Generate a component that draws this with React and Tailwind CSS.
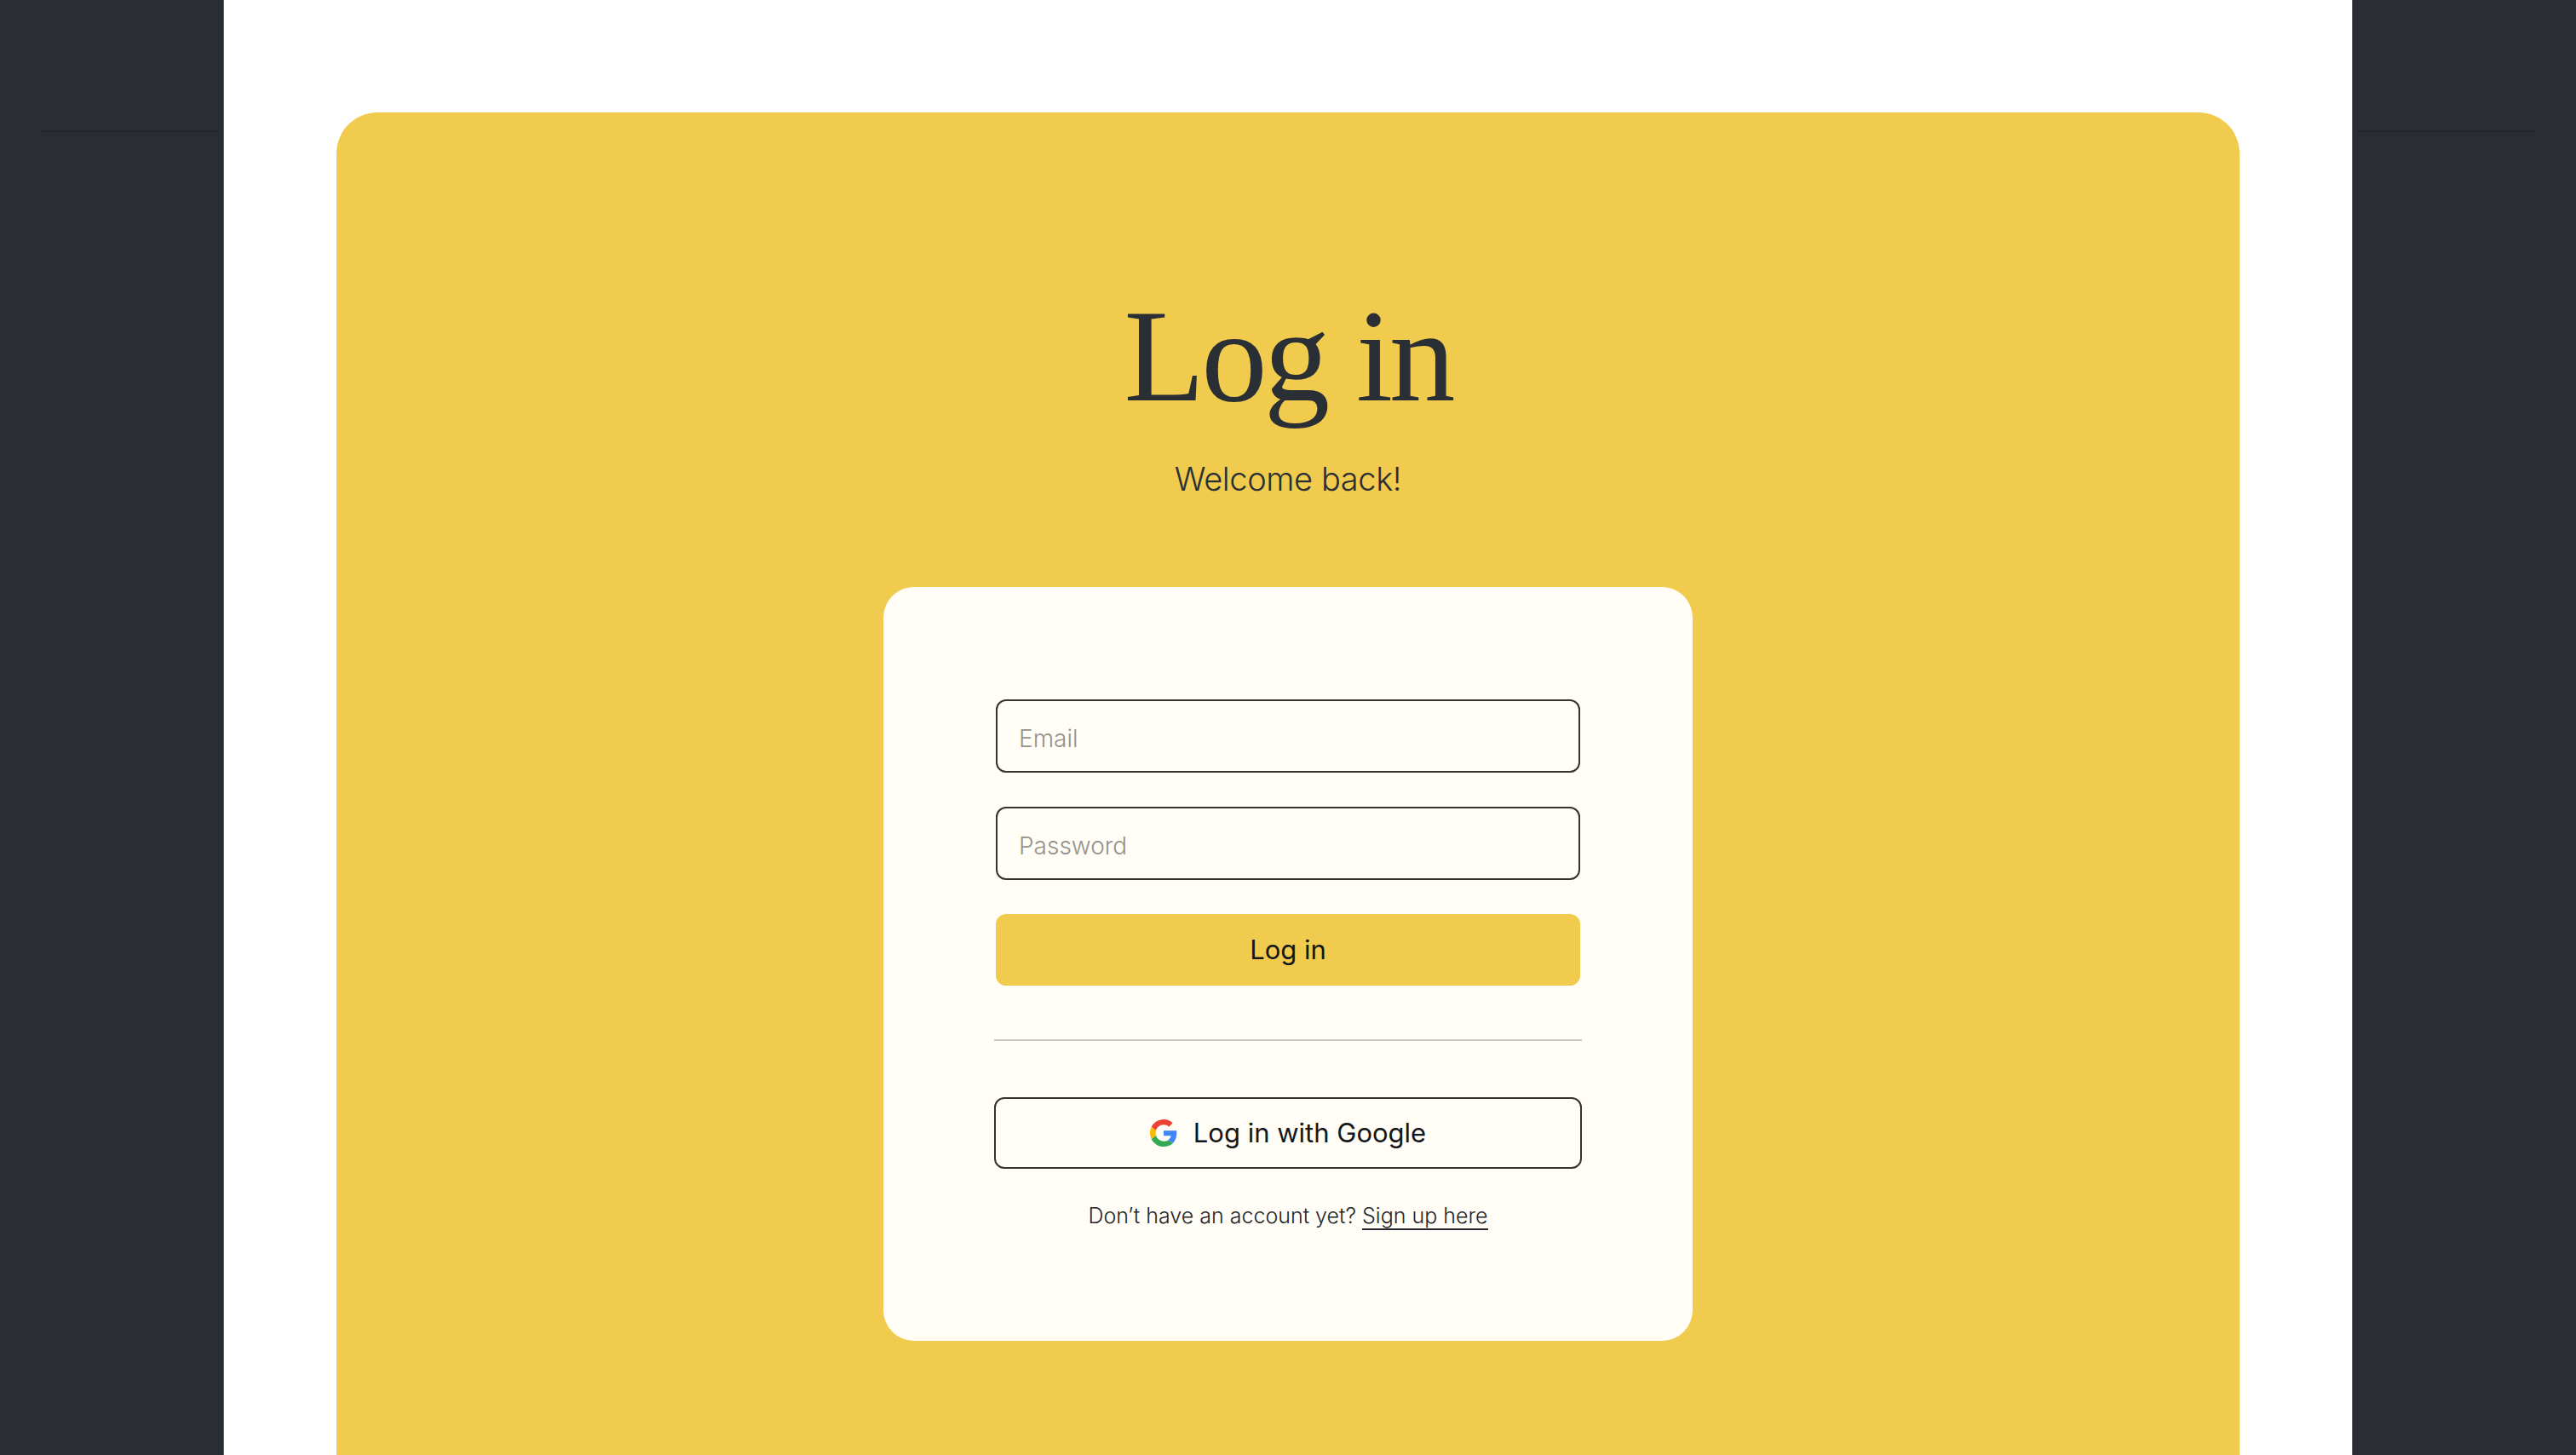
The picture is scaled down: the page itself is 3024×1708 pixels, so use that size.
const GoogleIcon = () => (
  <svg viewBox="0 0 48 48" className="w-[32px] h-[32px]">
    <path fill="#EA4335" d="M24 9.5c3.54 0 6.71 1.22 9.21 3.6l6.85-6.85C35.9 2.38 30.47 0 24 0 14.62 0 6.51 5.38 2.56 13.22l7.98 6.19C12.43 13.72 17.74 9.5 24 9.5z" />
    <path fill="#4285F4" d="M46.98 24.55c0-1.57-.15-3.09-.38-4.55H24v9.02h12.94c-.58 2.96-2.26 5.48-4.78 7.18l7.73 6c4.51-4.18 7.09-10.36 7.09-17.65z" />
    <path fill="#FBBC05" d="M10.53 28.59c-.48-1.45-.76-2.99-.76-4.59s.27-3.14.76-4.59l-7.98-6.19C.92 16.46 0 20.12 0 24c0 3.88.92 7.54 2.56 10.78l7.97-6.19z" />
    <path fill="#34A853" d="M24 48c6.48 0 11.93-2.13 15.89-5.81l-7.73-6c-2.15 1.45-4.92 2.3-8.16 2.3-6.26 0-11.57-4.22-13.47-9.91l-7.98 6.19C6.51 42.62 14.62 48 24 48z" />
  </svg>
);

const LeftSide = () => (
  <div className="w-[262px] shrink-0 pt-[153px]">
    <div className="h-[2px] ml-[48px] mr-[6px] bg-[#222529]" />
  </div>
);

const RightSide = () => (
  <div className="w-[262px] shrink-0 pt-[153px]">
    <div className="h-[2px] ml-[6px] mr-[48px] bg-[#222529]" />
  </div>
);

const App = () => {
  return (
    <div className="flex h-[1708px] overflow-hidden bg-[#2a2d32] font-['Inter',sans-serif]">
      <LeftSide />
      <main className="flex-1 flex flex-col bg-white pt-[132px] px-[132px] border-x border-[#5d666c]">
        <section className="flex-1 flex flex-col items-center bg-[#f1cb4d] rounded-t-[48px] text-[#2a2e35]">
          <h1 className="mt-[206px] text-[155px] leading-[160px] tracking-[-4px] font-['Liberation_Serif',serif]">Log in</h1>
          <p className="mt-[36px] text-[38px] leading-[56px] font-light tracking-[-0.4px]">Welcome back!</p>
          <div className="mt-[99px] w-[950px] h-[885px] flex flex-col bg-[#fffdf5] rounded-[36px] pt-[132px] px-[132px]">
            <input placeholder="Email" className="h-[86px] px-[25px] pt-[6px] text-[28px] font-light rounded-[12px] border-2 border-[#35332f] outline-none placeholder:text-[#96928a]" />
            <input type="text" placeholder="Password" className="mt-[40px] h-[86px] px-[25px] pt-[6px] text-[28px] font-light rounded-[12px] border-2 border-[#35332f] outline-none placeholder:text-[#96928a]" />
            <button className="mt-[40px] h-[84px] rounded-[12px] bg-[#f1cb4d] text-[31px] text-[#14161a]">Log in</button>
            <div className="mt-[63px] -mx-[2px] h-[2px] bg-[#c9c8c1]" />
            <button className="mt-[66px] -mx-[2px] h-[84px] flex items-center justify-center gap-[19px] rounded-[12px] border-2 border-[#35332f] text-[31px] text-[#14161a]">
              <GoogleIcon />
              Log in with Google
            </button>
            <p className="mt-[37px] text-center text-[25px] leading-[36px] font-light text-[#23262b]">
              Don’t have an account yet? <a href="#signup" className="border-b-2 border-[#23262b]">Sign up here</a>
            </p>
          </div>
        </section>
      </main>
      <RightSide />
    </div>
  );
};

export default App;
